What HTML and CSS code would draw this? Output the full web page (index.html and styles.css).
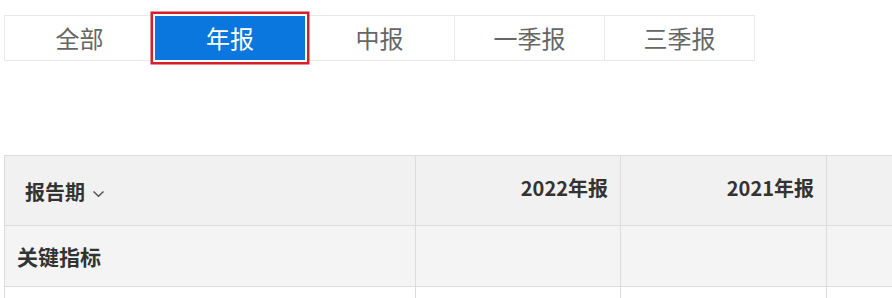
FILE: index.html
```html
<!DOCTYPE html>
<html lang="zh-CN">
<head>
<meta charset="utf-8">
<title>财务报表</title>
<link rel="stylesheet" href="styles.css">
</head>
<body>
<div class="page">
  <div class="tabs">
    <div class="tab">全部</div>
    <div class="tab active">年报</div>
    <div class="tab">中报</div>
    <div class="tab">一季报</div>
    <div class="tab">三季报</div>
  </div>
  <div class="table-wrap">
    <table class="report">
      <colgroup>
        <col class="c1"><col class="c2"><col class="c3"><col class="c4">
      </colgroup>
      <thead>
        <tr class="head">
          <th class="period">报告期 <svg class="chev" width="13" height="8" viewBox="0 0 13 8"><path d="M1.5 1.5 L6.5 6.3 L11.5 1.5" fill="none" stroke="#555" stroke-width="1.5"/></svg></th>
          <th class="year">2022年报</th>
          <th class="year">2021年报</th>
          <th class="year"></th>
        </tr>
      </thead>
      <tbody>
        <tr class="section">
          <td class="label">关键指标</td>
          <td></td><td></td><td></td>
        </tr>
        <tr class="row">
          <td></td><td></td><td></td><td></td>
        </tr>
      </tbody>
    </table>
  </div>
</div>
</body>
</html>
```
FILE: styles.css
```css
html, body {
  margin: 0;
  padding: 0;
  background: #fff;
  overflow: hidden;
}
body {
  font-family: "Noto Sans CJK SC", "Noto Sans", sans-serif;
  width: 892px;
  height: 298px;
}
.page {
  padding-left: 4px;
}
.tabs {
  margin-top: 15px;
  display: flex;
  width: 749px;
  height: 44px;
  border: 1px solid #e9e9e9;
}
.tab {
  width: 150px;
  flex: none;
  box-sizing: border-box;
  border-right: 1px solid #e9e9e9;
  display: flex;
  align-items: center;
  justify-content: center;
  font-size: 24px;
  color: #666;
  line-height: 1;
}
.tab:last-child {
  border-right: none;
  width: 149px;
}
.tab.active {
  background: #0a77de;
  color: #fff;
  border-right: none;
  position: relative;
  z-index: 1;
  box-shadow: 0 0 0 2px #fff, 0 0 0 4.5px #d71f2b;
}
.table-wrap {
  margin-top: 94px;
  width: 888px;
  height: 143px;
  overflow: hidden;
}
.report {
  border-collapse: collapse;
  table-layout: fixed;
  width: 1029px;
}
.c1 { width: 411px; }
.c2 { width: 205px; }
.c3 { width: 206px; }
.c4 { width: 206px; }
.report th, .report td {
  border: 1px solid #dcdcdc;
  padding: 0;
}
.head {
  height: 70px;
  background: #f1f1f1;
}
.head th {
  font-size: 20px;
  font-weight: bold;
  color: #333;
  vertical-align: middle;
}
.head .period {
  text-align: left;
  padding-left: 20px;
  padding-top: 2px;
}
.head .year {
  text-align: right;
  padding-right: 12px;
  padding-bottom: 6px;
}
.chev {
  margin-left: 2px;
  vertical-align: 2px;
}
.section {
  height: 61px;
  background: #f4f4f4;
}
.section .label {
  font-size: 21px;
  font-weight: bold;
  color: #333;
  padding-left: 12px;
}
.row {
  height: 40px;
  background: #fff;
}
```
